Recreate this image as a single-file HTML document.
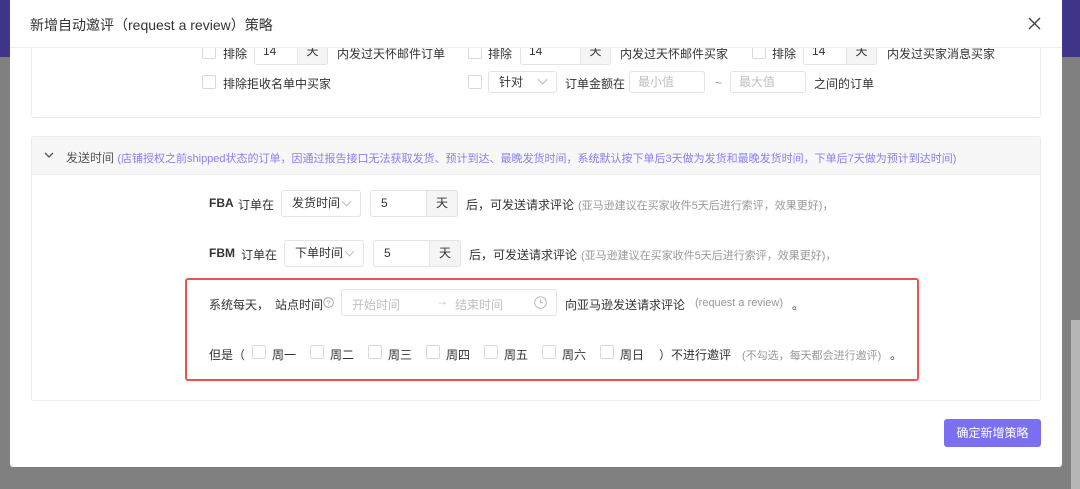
<!DOCTYPE html>
<html><head><meta charset="utf-8"><style>
*{margin:0;padding:0;box-sizing:border-box}
body{width:1080px;height:489px;overflow:hidden;background:#808080;position:relative;font-family:"Liberation Sans","Noto Sans CJK SC",sans-serif;font-size:12px;color:#333}
.a{position:absolute;white-space:nowrap}
.cb{position:absolute;width:14px;height:14px;border:1px solid #d9d9d9;border-radius:2px;background:#fff}
.inp{position:absolute;border:1px solid #e4e4e4;border-radius:3px;background:#fff;height:27px;line-height:25px;padding-left:8px;font-size:12px}
.add{position:absolute;top:-1px;bottom:-1px;right:-1px;background:#f5f5f5;border:1px solid #e4e4e4;border-radius:0 3px 3px 0;text-align:center}
.ph{color:#c0c0c0}
.hint{color:#999;font-size:11px}
.sel:after{content:"";position:absolute;right:10px;top:50%;margin-top:-6px;width:6px;height:6px;border-right:1px solid #bbb;border-bottom:1px solid #bbb;transform:rotate(45deg)}
</style></head><body>
<div class="a" style="left:0;top:0;width:10px;height:57px;background:#3e3588"></div>
<div class="a" style="left:1062px;top:0;width:18px;height:57px;background:#3e3588"></div>
<div class="a" style="left:1071px;top:320px;width:9px;height:169px;background:#b5b5b5"></div>
<div class="a" style="left:10px;top:0;width:1052px;height:467px;background:#fff;border-radius:0 0 3px 3px"></div>
<!-- section 1 -->
<div class="a" style="left:31px;top:30px;width:1010px;height:88px;border:1px solid #ececec;border-radius:3px;background:#fff"></div>
<div class="cb" style="left:202px;top:45px"></div><div class="a" style="left:223px;top:45px">排除</div>
<div class="inp" style="left:254px;top:38px;width:74px">14<div class="add" style="width:31px">天</div></div>
<div class="a" style="left:337px;top:45px">内发过天怀邮件订单</div>
<div class="cb" style="left:468px;top:45px"></div><div class="a" style="left:488px;top:45px">排除</div>
<div class="inp" style="left:520px;top:38px;width:91px">14<div class="add" style="width:31px">天</div></div>
<div class="a" style="left:620px;top:45px">内发过天怀邮件买家</div>
<div class="cb" style="left:752px;top:45px"></div><div class="a" style="left:772px;top:45px">排除</div>
<div class="inp" style="left:803px;top:38px;width:74px">14<div class="add" style="width:31px">天</div></div>
<div class="a" style="left:887px;top:45px">内发过买家消息买家</div>
<div class="cb" style="left:202px;top:75px"></div><div class="a" style="left:223px;top:75px">排除拒收名单中买家</div>
<div class="cb" style="left:468px;top:75px"></div>
<div class="inp sel" style="left:488px;top:71px;width:69px;height:22px;line-height:20px;padding-left:10px">针对</div>
<div class="a" style="left:565px;top:75px">订单金额在</div>
<div class="inp ph" style="left:629px;top:71px;width:76px;height:22px;line-height:20px">最小值</div>
<div class="a" style="left:715px;top:76px;color:#999">~</div>
<div class="inp ph" style="left:730px;top:71px;width:76px;height:22px;line-height:20px">最大值</div>
<div class="a" style="left:814px;top:75px">之间的订单</div>
<!-- header -->
<div class="a" style="left:10px;top:0;width:1052px;height:48px;background:#fff;border-bottom:1px solid #eee"></div>
<div class="a" style="left:30px;top:15px;font-size:14px;color:#333">新增自动邀评（request a review）策略</div>
<svg class="a" style="left:1028px;top:17px" width="13" height="13" viewBox="0 0 13 13"><path d="M1 1L12 12M12 1L1 12" stroke="#444" stroke-width="1.4"/></svg>
<!-- section 2 -->
<div class="a" style="left:31px;top:136px;width:1010px;height:265px;border:1px solid #ececec;border-radius:3px"></div>
<div class="a" style="left:32px;top:137px;width:1008px;height:38px;background:#f7f7f7;border-bottom:1px solid #ececec"></div>
<svg class="a" style="left:44px;top:152px" width="10" height="6" viewBox="0 0 10 6"><path d="M1 1L5 5L9 1" fill="none" stroke="#555" stroke-width="1.3"/></svg>
<div class="a" style="left:66px;top:149px;color:#555">发送时间 <span style="color:#8a80f0;font-size:11px">(店铺授权之前shipped状态的订单，因通过报告接口无法获取发货、预计到达、最晚发货时间，系统默认按下单后3天做为发货和最晚发货时间，下单后7天做为预计到达时间)</span></div>
<div class="a" style="left:209px;top:196px;font-weight:bold">FBA</div><div class="a" style="left:238px;top:196px">订单在</div>
<div class="inp sel" style="left:281px;top:190px;width:80px;padding-left:10px">发货时间</div>
<div class="inp" style="left:370px;top:190px;width:88px;padding-left:10px">5<div class="add" style="width:32px">天</div></div>
<div class="a" style="left:466px;top:196px">后，可发送请求评论</div>
<div class="a hint" style="left:578px;top:197px">(亚马逊建议在买家收件5天后进行索评，效果更好)，</div>
<div class="a" style="left:209px;top:246px;font-weight:bold">FBM</div><div class="a" style="left:241px;top:246px">订单在</div>
<div class="inp sel" style="left:284px;top:240px;width:80px;padding-left:10px">下单时间</div>
<div class="inp" style="left:373px;top:240px;width:88px;padding-left:10px">5<div class="add" style="width:32px">天</div></div>
<div class="a" style="left:469px;top:246px">后，可发送请求评论</div>
<div class="a hint" style="left:581px;top:247px">(亚马逊建议在买家收件5天后进行索评，效果更好)，</div>
<div class="a" style="left:185px;top:278px;width:734px;height:103px;border:2px solid #f25050;border-radius:3px"></div>
<div class="a" style="left:209px;top:296px">系统每天，</div>
<div class="a" style="left:275px;top:296px">站点时间</div>
<svg class="a" style="left:323px;top:297px" width="11" height="11" viewBox="0 0 11 11"><circle cx="5.5" cy="5.5" r="4.8" fill="none" stroke="#99a" stroke-width="0.9"/><text x="5.5" y="8.3" font-size="7.5" text-anchor="middle" fill="#99a" font-family="Liberation Sans">?</text></svg>
<div class="inp" style="left:341px;top:289px;width:216px"></div>
<div class="a ph" style="left:352px;top:296px">开始时间</div>
<div class="a ph" style="left:436px;top:294px">→</div>
<div class="a ph" style="left:455px;top:296px">结束时间</div>
<svg class="a" style="left:534px;top:296px" width="13" height="13" viewBox="0 0 13 13"><circle cx="6.5" cy="6.5" r="5.8" fill="none" stroke="#bbb"/><path d="M6.5 3.5V6.8H9" fill="none" stroke="#bbb"/></svg>
<div class="a" style="left:565px;top:296px">向亚马逊发送请求评论</div>
<div class="a hint" style="left:695px;top:297px">(request a review)</div>
<div class="a" style="left:792px;top:296px">。</div>
<div class="a" style="left:209px;top:346px">但是（</div>
<div class="cb" style="left:252px;top:345px"></div><div class="a" style="left:272px;top:346px">周一</div>
<div class="cb" style="left:310px;top:345px"></div><div class="a" style="left:330px;top:346px">周二</div>
<div class="cb" style="left:368px;top:345px"></div><div class="a" style="left:388px;top:346px">周三</div>
<div class="cb" style="left:426px;top:345px"></div><div class="a" style="left:446px;top:346px">周四</div>
<div class="cb" style="left:484px;top:345px"></div><div class="a" style="left:504px;top:346px">周五</div>
<div class="cb" style="left:542px;top:345px"></div><div class="a" style="left:562px;top:346px">周六</div>
<div class="cb" style="left:600px;top:345px"></div><div class="a" style="left:620px;top:346px">周日</div>
<div class="a" style="left:659px;top:346px">）不进行邀评</div>
<div class="a hint" style="left:742px;top:347px">(不勾选，每天都会进行邀评)</div>
<div class="a" style="left:890px;top:346px">。</div>
<div class="a" style="left:944px;top:419px;width:97px;height:28px;background:#7b70f2;border-radius:3px;color:#fff;text-align:center;line-height:28px">确定新增策略</div>
</body></html>
